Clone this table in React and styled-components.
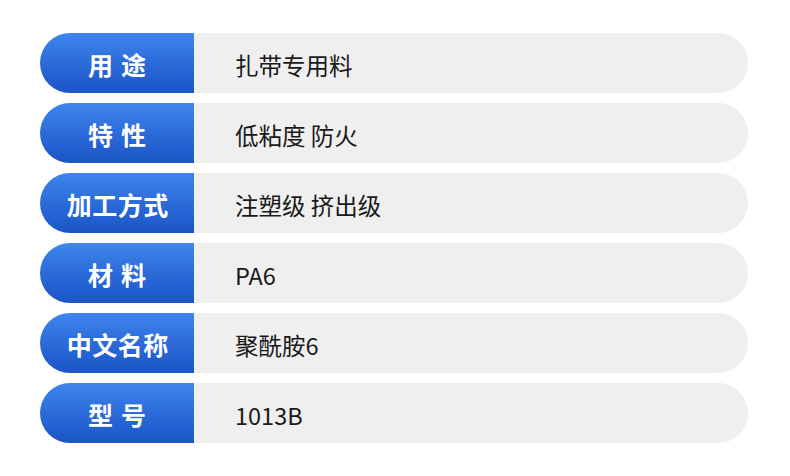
import React from 'react';
import styled, { createGlobalStyle } from 'styled-components';

const Global = createGlobalStyle`
  html, body {
    margin: 0;
    padding: 0;
    background: #fff;
    font-family: 'Noto Sans CJK SC', 'Noto Sans', sans-serif;
  }
`;

const Table = styled.div`
  width: 790px;
  height: 476px;
  box-sizing: border-box;
  padding: 33px 42px 0 40px;
  display: flex;
  flex-direction: column;
  gap: 10px;
`;

const Row = styled.div`
  display: flex;
  height: 60px;
`;

const Label = styled.div`
  width: 154px;
  flex: none;
  box-sizing: border-box;
  padding-top: 1px;
  border-radius: 30px 0 0 30px;
  background: linear-gradient(180deg, #3e86ec 0%, #2a68d8 55%, #1b55c6 100%);
  color: #fff;
  font-size: 25px;
  font-weight: 700;
  letter-spacing: ${p => (p.$wide ? '8px' : '0.5px')};
  text-indent: ${p => (p.$wide ? '8px' : '1.5px')};
  display: flex;
  align-items: center;
  justify-content: center;
`;

const Value = styled.div`
  flex: 1;
  box-sizing: border-box;
  background: #efefef;
  border-radius: 0 30px 30px 0;
  color: #1a1a1a;
  font-size: 23.5px;
  padding: 3px 0 0 41px;
  display: flex;
  align-items: center;
`;

const rows = [
  ['用途', '扎带专用料'],
  ['特性', '低粘度 防火'],
  ['加工方式', '注塑级 挤出级'],
  ['材料', 'PA6'],
  ['中文名称', '聚酰胺6'],
  ['型号', '1013B'],
];

export default function App() {
  return (
    <>
      <Global />
      <Table>
        {rows.map(([k, v]) => (
          <Row key={k}>
            <Label $wide={k.length === 2}>{k}</Label>
            <Value>{v}</Value>
          </Row>
        ))}
      </Table>
    </>
  );
}
